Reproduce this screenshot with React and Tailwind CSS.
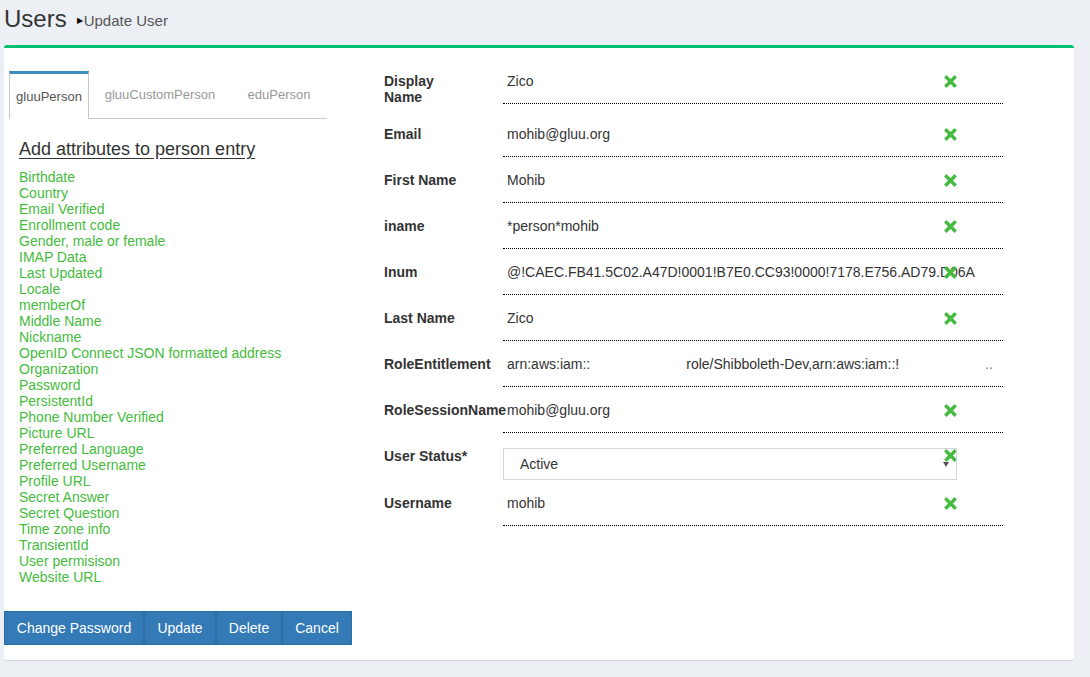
import React from "react";

const attributes = [
  "Birthdate",
  "Country",
  "Email Verified",
  "Enrollment code",
  "Gender, male or female",
  "IMAP Data",
  "Last Updated",
  "Locale",
  "memberOf",
  "Middle Name",
  "Nickname",
  "OpenID Connect JSON formatted address",
  "Organization",
  "Password",
  "PersistentId",
  "Phone Number Verified",
  "Picture URL",
  "Preferred Language",
  "Preferred Username",
  "Profile URL",
  "Secret Answer",
  "Secret Question",
  "Time zone info",
  "TransientId",
  "User permisison",
  "Website URL",
];

function RemoveIcon() {
  return (
    <svg width="13" height="13" viewBox="0 0 13 13" className="block">
      <path d="M2.5 2.5 L10.5 10.5 M10.5 2.5 L2.5 10.5" stroke="#45bb40" strokeWidth="3.4" strokeLinecap="square" />
    </svg>
  );
}

function FieldRow({ label, children }) {
  return (
    <div className="flex items-start">
      <div className="w-[119px] shrink-0 pt-[3px] font-bold text-[14px] leading-[16px] text-[#333] whitespace-nowrap">
        {label}
      </div>
      <div className="w-[500px] h-[34px] border-b border-dotted border-black pl-[4px] pt-[3px] text-[14px] leading-[16px] text-[#333] whitespace-nowrap">
        {children}
      </div>
      <div className="-ml-[59px] pt-[5px]">
        <RemoveIcon />
      </div>
    </div>
  );
}

export default function App() {
  return (
    <div className="min-h-[677px] bg-[#ecf0f5] font-['Liberation_Sans',Arial,sans-serif] text-[#333]">
      <div className="flex items-end h-[36px] px-[4px] pb-[3px]">
        <h1 className="text-[24px] leading-[28px] text-[#333]">Users</h1>
        <span className="ml-[10px] mb-[3px] text-[15px] leading-[18px] text-[#555] flex items-center">
          <span className="text-[8px] text-black mr-[1px]">▶</span>Update User
        </span>
      </div>

      <div className="mt-[9px] ml-[4px] w-[1070px] bg-white border-t-[3px] border-[#00c073] rounded-[3px] shadow-[0_1px_1px_rgba(0,0,0,0.12)] flex pb-[15px]">
        <div className="w-[370px] shrink-0 flex flex-col">
          <div className="mt-[23px] ml-[5px] w-[318px] flex border-b border-[#c8c8c8] h-[48px] text-[13px]">
            <div className="w-[80px] -mb-px bg-white border-t-[3px] border-t-[#3c8dbc] border-x border-x-[#c8c8c8] flex items-center justify-center text-[#555]">
              gluuPerson
            </div>
            <div className="w-[142px] flex items-center justify-center text-[#999]">gluuCustomPerson</div>
            <div className="w-[96px] flex items-center justify-center text-[#999]">eduPerson</div>
          </div>

          <div className="ml-[15px] mt-[18px] text-[18px] leading-[24px] underline underline-offset-[3px] text-[#333]">
            Add attributes to person entry
          </div>
          <ul className="ml-[15px] mt-[8px] text-[14px] leading-[16px] text-[#45bb3c]">
            {attributes.map((a) => (
              <li key={a}>{a}</li>
            ))}
          </ul>

          <div className="mt-[26px] flex text-[14px] text-white">
            <button className="h-[34px] w-[140px] bg-[#337ab7] border border-[#2e6da4]">Change Password</button>
            <button className="h-[34px] w-[72px] bg-[#337ab7] border border-[#2e6da4]">Update</button>
            <button className="h-[34px] w-[66px] bg-[#337ab7] border border-[#2e6da4]">Delete</button>
            <button className="h-[34px] w-[70px] bg-[#337ab7] border border-[#2e6da4]">Cancel</button>
          </div>
        </div>

        <div className="ml-[10px] pt-[22px] flex flex-col gap-[12px]">
          <div className="flex items-start">
            <div className="w-[119px] shrink-0 pt-[3px] font-bold text-[14px] leading-[16px] text-[#333]">
              Display
              <br />
              Name
            </div>
            <div className="w-[500px] h-[34px] border-b border-dotted border-black pl-[4px] pt-[3px] text-[14px] leading-[16px]">
              Zico
            </div>
            <div className="-ml-[59px] pt-[5px]">
              <RemoveIcon />
            </div>
          </div>
          <div className="mt-[6px]">
            <FieldRow label="Email">mohib@gluu.org</FieldRow>
          </div>
          <FieldRow label="First Name">Mohib</FieldRow>
          <FieldRow label="iname">*person*mohib</FieldRow>
          <FieldRow label="Inum">@!CAEC.FB41.5C02.A47D!0001!B7E0.CC93!0000!7178.E756.AD79.D06A</FieldRow>
          <FieldRow label="Last Name">Zico</FieldRow>
          <div className="flex items-start">
            <div className="w-[119px] shrink-0 pt-[3px] font-bold text-[14px] leading-[16px] text-[#333] whitespace-nowrap">
              RoleEntitlement
            </div>
            <div className="w-[500px] h-[34px] border-b border-dotted border-black pl-[4px] pt-[3px] text-[14px] leading-[16px] text-[#333] whitespace-nowrap flex">
              <span>arn:aws:iam::</span>
              <span className="ml-[96px]">role/Shibboleth-Dev,arn:aws:iam::!</span>
              <span className="ml-[86px] text-[#777]">..</span>
            </div>
          </div>
          <FieldRow label="RoleSessionName">mohib@gluu.org</FieldRow>
          <div className="flex items-start mt-[3px]">
            <div className="w-[119px] shrink-0 pt-0 font-bold text-[14px] leading-[16px] text-[#333]">User Status*</div>
            <div className="relative w-[454px] h-[32px] border border-[#d2d6de] pl-[16px] flex items-center text-[14px]">
              Active
              <span className="absolute right-[7px] top-[13px] w-0 h-0 border-x-[3px] border-x-transparent border-t-[5px] border-t-[#555]"></span>
            </div>
            <div className="-ml-[13px] pt-[1px]">
              <RemoveIcon />
            </div>
          </div>
          <FieldRow label="Username">mohib</FieldRow>
        </div>
      </div>
    </div>
  );
}
